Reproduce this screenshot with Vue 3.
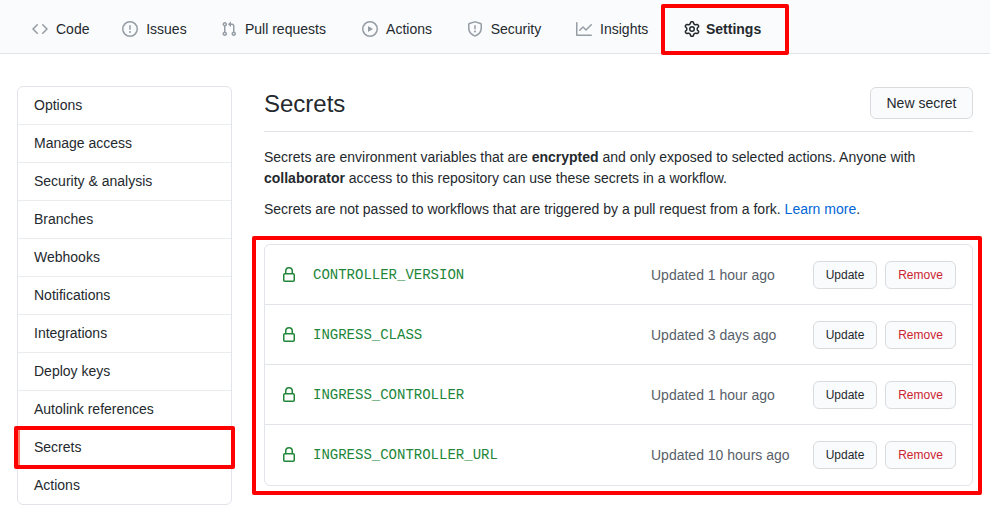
<template>
  <div class="page">
    <nav class="tabs">
      <a v-for="tab in tabs" :key="tab.label" class="tab" :class="{ selected: tab.selected }">
        <svg class="tab-icon" width="16" height="16" viewBox="0 0 16 16"><path fill-rule="evenodd" :d="tab.icon" /></svg>
        <span class="tab-label" :data-label="tab.label">{{ tab.label }}</span>
        <i v-if="tab.selected" class="mark"></i>
      </a>
    </nav>

    <div class="content">
      <aside class="menu">
        <a v-for="item in menu" :key="item" class="menu-item" :class="{ active: item === 'Secrets' }">
          {{ item }}
          <i v-if="item === 'Secrets'" class="mark"></i>
        </a>
      </aside>

      <main class="main">
        <div class="head">
          <h2>Secrets</h2>
          <button class="btn big">New secret</button>
        </div>
        <p class="first">
          Secrets are environment variables that are <b>encrypted</b> and only exposed to selected actions. Anyone with
          <b>collaborator</b> access to this repository can use these secrets in a workflow.
        </p>
        <p class="second">
          Secrets are not passed to workflows that are triggered by a pull request from a fork.
          <a class="link">Learn more</a>.
        </p>
        <div class="box">
          <div v-for="secret in secrets" :key="secret.name" class="row">
            <svg class="lock" width="16" height="16" viewBox="0 0 16 16"><path fill-rule="evenodd" :d="lockIcon" /></svg>
            <code class="name">{{ secret.name }}</code>
            <span class="when">Updated {{ secret.when }}</span>
            <button class="btn small">Update</button>
            <button class="btn small danger">Remove</button>
          </div>
          <i class="mark"></i>
        </div>
      </main>
    </div>
  </div>
</template>

<script setup>
const lockIcon = 'M4 4v2h-.25A1.75 1.75 0 002 7.75v5.5c0 .966.784 1.75 1.75 1.75h8.5A1.75 1.75 0 0014 13.25v-5.5A1.75 1.75 0 0012.25 6H12V4a4 4 0 10-8 0zm6.5 2V4a2.5 2.5 0 00-5 0v2h5zM12 7.5h.25a.25.25 0 01.25.25v5.5a.25.25 0 01-.25.25h-8.5a.25.25 0 01-.25-.25v-5.5a.25.25 0 01.25-.25H12z'

const tabs = [
  { label: 'Code', icon: 'M4.72 3.22a.75.75 0 011.06 1.06L2.06 8l3.72 3.72a.75.75 0 11-1.06 1.06L.47 8.53a.75.75 0 010-1.06l4.25-4.25zm6.56 0a.75.75 0 10-1.06 1.06L13.94 8l-3.72 3.72a.75.75 0 101.06 1.06l4.25-4.25a.75.75 0 000-1.06l-4.25-4.25z' },
  { label: 'Issues', icon: 'M8 1.5a6.5 6.5 0 100 13 6.5 6.5 0 000-13zM0 8a8 8 0 1116 0A8 8 0 010 8zm9 3a1 1 0 11-2 0 1 1 0 012 0zm-.25-6.25a.75.75 0 00-1.5 0v3.5a.75.75 0 001.5 0v-3.5z' },
  { label: 'Pull requests', icon: 'M7.177 3.073L9.573.677A.25.25 0 0110 .854v4.792a.25.25 0 01-.427.177L7.177 3.427a.25.25 0 010-.354zM3.75 2.5a.75.75 0 100 1.5.75.75 0 000-1.5zm-2.25.75a2.25 2.25 0 113 2.122v5.256a2.251 2.251 0 11-1.5 0V5.372A2.25 2.25 0 011.5 3.25zM11 2.5h-1V4h1a1 1 0 011 1v5.628a2.251 2.251 0 101.5 0V5A2.5 2.5 0 0011 2.5zm1 10.25a.75.75 0 111.5 0 .75.75 0 01-1.5 0zM3.75 12a.75.75 0 100 1.5.75.75 0 000-1.5z' },
  { label: 'Actions', icon: 'M1.5 8a6.5 6.5 0 1113 0 6.5 6.5 0 01-13 0zM8 0a8 8 0 100 16A8 8 0 008 0zM6.379 5.227A.25.25 0 006 5.442v5.117a.25.25 0 00.379.214l4.264-2.559a.25.25 0 000-.428L6.379 5.227z' },
  { label: 'Security', icon: 'M7.467.133a1.75 1.75 0 011.066 0l5.25 1.68A1.75 1.75 0 0115 3.48V7c0 1.566-.32 3.182-1.303 4.682-.983 1.498-2.585 2.813-5.032 3.855a1.7 1.7 0 01-1.33 0c-2.447-1.042-4.049-2.357-5.032-3.855C1.32 10.182 1 8.566 1 7V3.48a1.75 1.75 0 011.217-1.667l5.25-1.68zm.61 1.429a.25.25 0 00-.153 0l-5.25 1.68a.25.25 0 00-.174.238V7c0 1.358.275 2.666 1.057 3.86.784 1.194 2.121 2.34 4.366 3.297a.2.2 0 00.154 0c2.245-.956 3.582-2.104 4.366-3.298C13.225 9.666 13.5 8.36 13.5 7V3.48a.25.25 0 00-.174-.237l-5.25-1.68zM9 10.5a1 1 0 11-2 0 1 1 0 012 0zm-.25-5.75a.75.75 0 10-1.5 0v3a.75.75 0 001.5 0v-3z' },
  { label: 'Insights', icon: 'M1.5 1.75a.75.75 0 00-1.5 0v12.5c0 .414.336.75.75.75h14.5a.75.75 0 000-1.5H1.5V1.75zm14.28 2.53a.75.75 0 00-1.06-1.06L10 7.94 7.53 5.47a.75.75 0 00-1.06 0L3.22 8.72a.75.75 0 001.06 1.06L7 7.06l2.47 2.47a.75.75 0 001.06 0l5.25-5.25z' },
  { label: 'Settings', selected: true, icon: 'M7.429 1.525a6.593 6.593 0 011.142 0c.036.003.108.036.137.146l.289 1.105c.147.56.55.967.997 1.189.174.086.341.183.501.29.417.278.97.423 1.53.27l1.102-.303c.11-.03.175.016.195.046.219.31.41.641.573.989.014.031.022.11-.059.19l-.815.806c-.411.406-.562.957-.53 1.456a4.588 4.588 0 010 .582c-.032.499.119 1.05.53 1.456l.815.806c.08.08.073.159.059.19a6.494 6.494 0 01-.573.99c-.02.029-.086.074-.195.045l-1.103-.303c-.559-.153-1.112-.008-1.529.27-.16.107-.327.204-.5.29-.449.222-.851.628-.998 1.189l-.289 1.105c-.029.11-.101.143-.137.146a6.613 6.613 0 01-1.142 0c-.036-.003-.108-.037-.137-.146l-.289-1.105c-.147-.56-.55-.967-.997-1.189a4.502 4.502 0 01-.501-.29c-.417-.278-.97-.423-1.53-.27l-1.102.303c-.11.03-.175-.016-.195-.046a6.492 6.492 0 01-.573-.989c-.014-.031-.022-.11.059-.19l.815-.806c.411-.406.562-.957.53-1.456a4.587 4.587 0 010-.582c.032-.499-.119-1.05-.53-1.456l-.815-.806c-.08-.08-.073-.159-.059-.19a6.44 6.44 0 01.573-.99c.02-.029.086-.075.195-.045l1.103.303c.559.153 1.112.008 1.529-.27.16-.107.327-.204.5-.29.449-.222.851-.628.998-1.189l.289-1.105c.029-.11.101-.143.137-.146zM8 0c-.236 0-.47.01-.701.03-.743.065-1.29.615-1.458 1.261l-.29 1.106c-.017.066-.078.158-.211.224a5.994 5.994 0 00-.668.386c-.123.082-.233.09-.3.071L3.27 2.776c-.644-.177-1.392.02-1.82.63a7.977 7.977 0 00-.704 1.217c-.315.675-.111 1.422.363 1.891l.815.806c.05.048.098.147.088.294a6.084 6.084 0 000 .772c.01.147-.038.246-.088.294l-.815.806c-.474.469-.678 1.216-.363 1.891.2.428.436.835.704 1.218.428.609 1.176.806 1.82.63l1.103-.303c.066-.019.176-.011.299.071.213.143.436.272.668.386.133.066.194.158.212.224l.289 1.106c.169.646.715 1.196 1.458 1.26a8.094 8.094 0 001.402 0c.743-.064 1.29-.614 1.458-1.26l.29-1.106c.017-.066.078-.158.211-.224a5.98 5.98 0 00.668-.386c.123-.082.233-.09.3-.071l1.102.302c.644.177 1.392-.02 1.82-.63.268-.382.505-.789.704-1.217.315-.675.111-1.422-.364-1.891l-.814-.806c-.05-.048-.098-.147-.088-.294a6.1 6.1 0 000-.772c-.01-.147.039-.246.088-.294l.814-.806c.475-.469.679-1.216.364-1.891a7.992 7.992 0 00-.704-1.218c-.428-.609-1.176-.806-1.82-.63l-1.103.303c-.066.019-.176.011-.299-.071a5.991 5.991 0 00-.668-.386c-.133-.066-.194-.158-.212-.224L10.16 1.29C9.99.645 9.444.095 8.701.031A8.094 8.094 0 008 0zm1.5 8a1.5 1.5 0 11-3 0 1.5 1.5 0 013 0zM11 8a3 3 0 11-6 0 3 3 0 016 0z' }
]

const menu = ['Options', 'Manage access', 'Security & analysis', 'Branches', 'Webhooks', 'Notifications', 'Integrations', 'Deploy keys', 'Autolink references', 'Secrets', 'Actions']

const secrets = [
  { name: 'CONTROLLER_VERSION', when: '1 hour ago' },
  { name: 'INGRESS_CLASS', when: '3 days ago' },
  { name: 'INGRESS_CONTROLLER', when: '1 hour ago' },
  { name: 'INGRESS_CONTROLLER_URL', when: '10 hours ago' }
]
</script>

<style>
html, body {
  margin: 0;
  background: #fff;
  overflow: hidden;
}
</style>

<style scoped>
.page {
  width: 990px;
  height: 512px;
  font-family: "Liberation Sans", Arial, sans-serif;
  font-size: 14px;
  line-height: 21px;
  color: #24292e;
  overflow: hidden;
}

.tabs {
  display: flex;
  height: 53px;
  padding-left: 17px;
  background: #fafbfc;
  border-bottom: 1px solid #e1e4e8;
}

.tab {
  position: relative;
  display: flex;
  align-items: center;
  gap: 8px;
  padding: 5px 15px 0;
  margin-right: .2px;
}

.tab:nth-child(1),
.tab:nth-child(2) {
  margin-right: 1.2px;
}

.tab:nth-child(3),
.tab:nth-child(4) {
  margin-right: -.8px;
}

.tab-icon {
  fill: #959da5;
}

/* hidden bold copy keeps every tab as wide as its selected state */
.tab-label {
  display: inline-flex;
  flex-direction: column;
}

.tab-label::after {
  content: attr(data-label);
  height: 0;
  overflow: hidden;
  visibility: hidden;
  font-weight: 700;
}

.tab.selected {
  font-weight: 700;
  gap: 6px;
}

.tab.selected .tab-icon {
  fill: #24292e;
}

.mark {
  position: absolute;
  border: 4px solid #ff0000;
  border-radius: 2px;
  pointer-events: none;
}

.tab .mark {
  left: -8px;
  right: -13px;
  top: 4px;
  bottom: -2px;
}

.content {
  display: flex;
  gap: 32px;
  padding: 32px 17px 0;
}

.menu {
  width: 215px;
  box-sizing: border-box;
  flex: none;
  align-self: flex-start;
  border: 1px solid #e1e4e8;
  border-radius: 6px;
}

.menu-item {
  position: relative;
  display: flex;
  align-items: center;
  height: 38px;
  box-sizing: border-box;
  padding-left: 16px;
  border-bottom: 1px solid #eaecef;
}

.menu-item:last-child {
  border-bottom: 0;
  height: 37px;
}

.menu-item.active {
  box-shadow: inset 2px 0 0 #f9826c;
}

.menu-item .mark {
  left: -4px;
  right: -4px;
  top: -3px;
  bottom: -3px;
}

.main {
  flex: 1;
  min-width: 0;
}

.head {
  display: flex;
  align-items: center;
  justify-content: space-between;
  height: 45px;
  border-bottom: 1px solid #e1e4e8;
}

.head h2 {
  margin: -9px 0 0;
  font-size: 24px;
  line-height: 36px;
  font-weight: 400;
}

.btn {
  box-sizing: border-box;
  font-family: inherit;
  color: #24292e;
  background: #fafbfc;
  border: 1px solid #d9dbde;
  border-radius: 6px;
  padding: 0;
}

.btn.big {
  width: 103px;
  height: 32px;
  margin-top: -12px;
  font-size: 14px;
}

.btn.small {
  height: 28px;
  font-size: 12px;
  width: 64px;
  margin-top: 1px;
  margin-right: 8px;
}

.btn.danger {
  width: 71px;
  margin-right: 0;
  color: #cb2431;
}

p {
  margin: 0;
}

.first {
  margin-top: 15px;
}

.second {
  margin-top: 10px;
}

.link {
  color: #0366d6;
}

.box {
  position: relative;
  margin-top: 24px;
  border: 1px solid #e1e4e8;
  border-radius: 6px;
}

.box .mark {
  left: -13px;
  right: -10px;
  top: -9px;
  bottom: -10px;
}

.row {
  display: flex;
  align-items: center;
  box-sizing: border-box;
  height: 60px;
  padding: 0 16px;
  border-bottom: 1px solid #e1e4e8;
}

.row:nth-last-child(2) {
  border-bottom-color: transparent;
}

.lock {
  fill: #22863a;
  margin-top: 1px;
  margin-right: 16px;
}

.name {
  flex: 1;
  margin-top: 2px;
  font-family: "Liberation Mono", monospace;
  font-size: 14px;
  color: #22863a;
}

.when {
  width: 162px;
  margin-top: 2px;
  color: #586069;
}
</style>
